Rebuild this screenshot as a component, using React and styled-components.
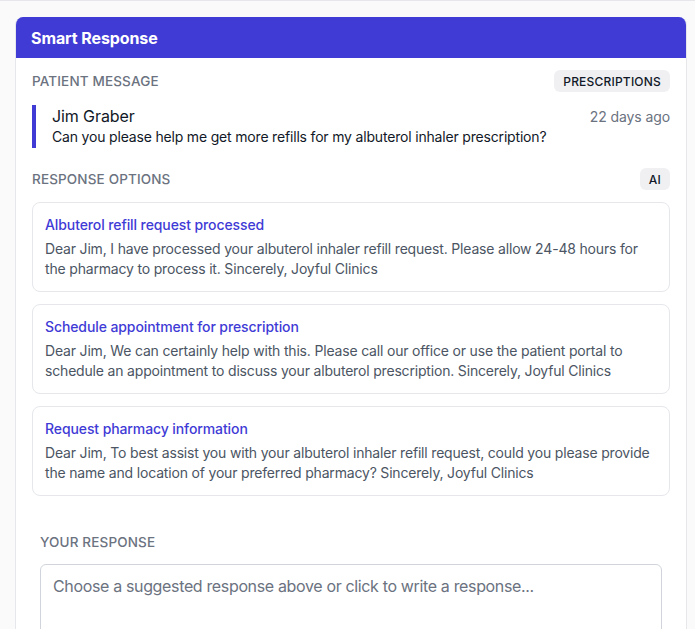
import styled, { createGlobalStyle } from 'styled-components'

const GlobalStyle = createGlobalStyle`
   * { box-sizing: border-box; }
   body {
      margin: 0;
      background: #fafafa;
      font-family: Inter, 'Liberation Sans', sans-serif;
      -webkit-font-smoothing: antialiased;
   }
`

const Page = styled.div`
   border-top: 1px solid #e5e7eb;
   padding: 16px 8px 0 15px;
   height: 629px;
   overflow: hidden;
`

const Card = styled.div`
   background: #fff;
   border: 1px solid #e5e7eb;
   border-top: none;
   border-radius: 8px 8px 0 0;
   overflow: hidden;
`

const Header = styled.div`
   background: #403bd5;
   color: #fff;
   height: 41px;
   display: flex;
   align-items: center;
   padding: 0 16px;
   font-size: 16px;
   font-weight: 700;
   letter-spacing: -0.1px;
   margin: 0 -1px;
`

const Body = styled.div`
   padding: 12px 16px 0 16px;
`

const SectionHead = styled.div`
   display: flex;
   justify-content: space-between;
   align-items: center;
   height: 22px;
`

const Label = styled.div`
   font-size: 13.5px;
   font-weight: 500;
   color: #6b7280;
   letter-spacing: 0.15px;
   text-transform: uppercase;
`

const Badge = styled.span`
   background: #f0f0f3;
   color: #111827;
   font-size: 12px;
   font-weight: 500;
   border-radius: 6px;
   height: 22px;
   padding: 0 9px;
   display: inline-flex;
   align-items: center;
   letter-spacing: 0.2px;
`

const Quote = styled.div`
   margin: 13px 0 20px;
   border-left: 4px solid #403bd5;
   padding-left: 16px;
   height: 43px;
`

const QuoteTop = styled.div`
   display: flex;
   justify-content: space-between;
   align-items: baseline;
`

const Name = styled.div`
   font-size: 16px;
   color: #111827;
   line-height: 22px;
   letter-spacing: -0.1px;
`

const Time = styled.div`
   font-size: 14px;
   color: #6b7280;
   letter-spacing: -0.1px;
`

const Message = styled.div`
   font-size: 14px;
   color: #111827;
   line-height: 20px;
   letter-spacing: -0.18px;
`

const Options = styled.div`
   display: flex;
   flex-direction: column;
   gap: 12px;
   margin-top: 12px;
`

const Option = styled.div`
   border: 1px solid #e5e7eb;
   border-radius: 8px;
   padding: 12px 12px 13px;
   height: 90px;
`

const OptionTitle = styled.div`
   font-size: 14px;
   font-weight: 500;
   color: #3f3bd6;
   line-height: 20px;
   letter-spacing: -0.1px;
   margin-bottom: 4px;
`

const OptionText = styled.div`
   font-size: 14px;
   color: #4b5563;
   line-height: 20px;
   letter-spacing: -0.18px;
`

const ResponseSection = styled.div`
   padding: 36px 8px 0;
`

const ResponseLabel = styled(Label)`
   line-height: 20px;
   margin-bottom: 12px;
`

const TextArea = styled.textarea`
   display: block;
   width: 100%;
   height: 100px;
   border: 1px solid #d1d5db;
   border-radius: 6px;
   padding: 10px 12px;
   font-family: inherit;
   font-size: 16px;
   line-height: 22px;
   letter-spacing: -0.35px;
   color: #111827;
   resize: none;
   outline: none;

   &::placeholder {
      color: #6b7280;
   }
`

const options = [
   {
      title: 'Albuterol refill request processed',
      text: 'Dear Jim, I have processed your albuterol inhaler refill request. Please allow 24-48 hours for the pharmacy to process it. Sincerely, Joyful Clinics',
   },
   {
      title: 'Schedule appointment for prescription',
      text: 'Dear Jim, We can certainly help with this. Please call our office or use the patient portal to schedule an appointment to discuss your albuterol prescription. Sincerely, Joyful Clinics',
   },
   {
      title: 'Request pharmacy information',
      text: 'Dear Jim, To best assist you with your albuterol inhaler refill request, could you please provide the name and location of your preferred pharmacy? Sincerely, Joyful Clinics',
   },
]

const App = () => {
   return (
      <>
         <GlobalStyle />
         <Page>
            <Card>
               <Header>Smart Response</Header>
               <Body>
                  <SectionHead>
                     <Label>Patient Message</Label>
                     <Badge>PRESCRIPTIONS</Badge>
                  </SectionHead>
                  <Quote>
                     <QuoteTop>
                        <Name>Jim Graber</Name>
                        <Time>22 days ago</Time>
                     </QuoteTop>
                     <Message>Can you please help me get more refills for my albuterol inhaler prescription?</Message>
                  </Quote>
                  <SectionHead>
                     <Label>Response Options</Label>
                     <Badge>AI</Badge>
                  </SectionHead>
                  <Options>
                     {options.map((o) => (
                        <Option key={o.title}>
                           <OptionTitle>{o.title}</OptionTitle>
                           <OptionText>{o.text}</OptionText>
                        </Option>
                     ))}
                  </Options>
                  <ResponseSection>
                     <ResponseLabel>Your Response</ResponseLabel>
                     <TextArea placeholder="Choose a suggested response above or click to write a response..." />
                  </ResponseSection>
               </Body>
            </Card>
         </Page>
      </>
   )
}

export default App
